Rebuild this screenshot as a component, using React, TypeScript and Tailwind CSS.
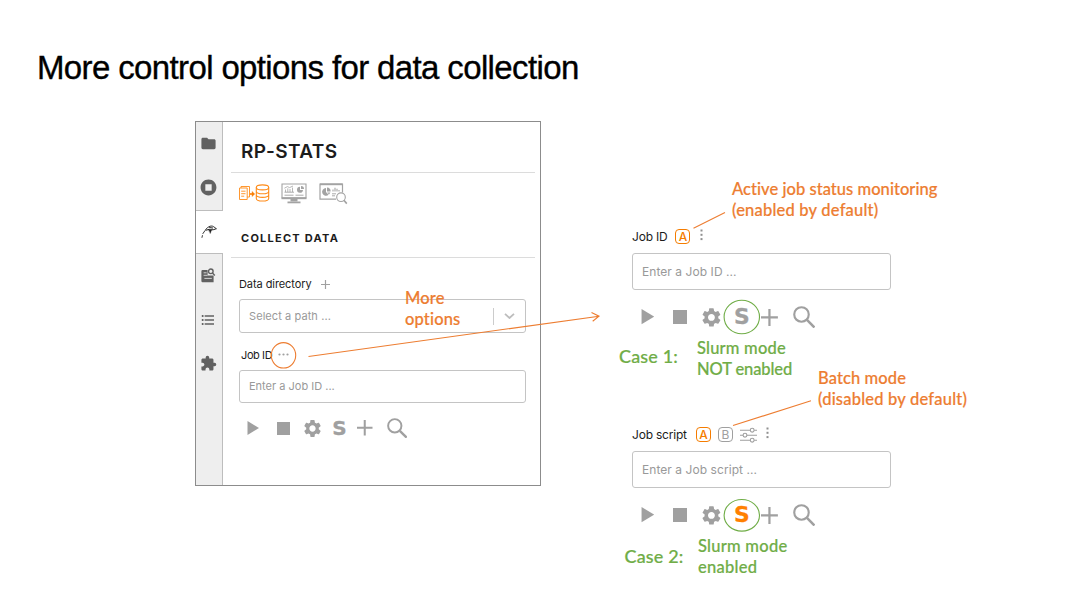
import type { ReactNode } from "react";
import { MdExtension, MdFolder, MdFormatListBulleted, MdSettings, MdStopCircle } from "react-icons/md";

function Bird() {
  return (
    <svg className="h-[14px] w-[16px]" viewBox="0 0 16 14" fill="none" stroke="#222" strokeLinecap="round">
      <path d="M1 12.4 1.4 10.6M1.9 8.6 4 5.6" strokeWidth="0.9" />
      <path d="M4.6 4.6Q6.4 2 9 1.2 11.4.5 12.8 1.8L15.2 3.6" strokeWidth="0.9" />
      <path d="M5 5.2 8.2 4.4M9.6 5 12.8 4.6 15 3.8M8.6 2.6 11.6 3" strokeWidth="1" />
      <path d="M7.6 4.4 10.6 4.6 9.4 8.2Z" fill="#222" strokeWidth="0.4" />
    </svg>
  );
}

function ReportSearch() {
  return (
    <svg className="h-[15px] w-[15px]" viewBox="0 0 15 15" fill="none">
      <path d="M1.6 2H6.6V7.4H12.6V14.2H1.6Q.4 14.2.4 13V3.2Q.4 2 1.6 2Z" fill="#616161" />
      <path d="M2.6 4.8H5.6M2.6 7.3H6.5M3.4 10.4H10.8" stroke="#eee" strokeWidth="0.8" />
      <circle cx="9.8" cy="3.3" r="2.3" fill="#eee" stroke="#616161" strokeWidth="1.4" />
      <path d="M11.5 5 13.8 7.4" stroke="#616161" strokeWidth="1.4" />
    </svg>
  );
}

function CollectIcon() {
  return (
    <svg className="-mt-px h-[18px] w-[31px]" viewBox="0 0 31 18" fill="none" stroke="#ff8c1a" strokeWidth="1">
      <path d="M.5 4H8.2V15.5H.5ZM2 4V2.5H10.5V13H8.2" strokeWidth=".9" />
      <path d="M2.2 7.2H6.5M2.2 9.7H6.5M2.2 12.2H5.2" strokeWidth=".9" />
      <path d="M11 10H14" strokeWidth="1.8" />
      <path d="M13 7.4 15.8 10 13 12.6Z" fill="#f57c00" strokeWidth=".4" />
      <ellipse cx="23.5" cy="3.4" rx="6.2" ry="2.5" strokeWidth="1.1" />
      <path d="M17.3 3.4V14.4C17.3 17.8 29.7 17.8 29.7 14.4V3.4M17.3 7.2C17.3 10.6 29.7 10.6 29.7 7.2M17.3 10.8C17.3 14.2 29.7 14.2 29.7 10.8" strokeWidth="1.1" />
    </svg>
  );
}

function MonitorIcon() {
  return (
    <svg className="h-[21px] w-[26px]" viewBox="0 0 26 21" fill="none" stroke="#a3a3a3">
      <path d="M1 1H25V14.8H1Z" strokeWidth="1.1" />
      <path d="M.5 15.3H25.5" strokeWidth="1.8" />
      <path d="M9.5 16H16.5V18.4H9.5Z" fill="#a3a3a3" stroke="none" />
      <path d="M6.5 19.4H19.5" strokeWidth="1.8" />
      <path d="M4.5 9V6.5M6.8 9V5.4M9 9V6M11.5 9V4.6M3.4 5.2 6.4 3.6 8.6 4.6 12 3" strokeWidth=".8" />
      <path d="M3.5 9.2H13M3.5 12.2H12.5M14.5 12.2H22.5" strokeWidth=".9" />
      <path d="M19 3.8A3 3 0 1 0 22 7H19Z" fill="#a3a3a3" stroke="none" />
      <path d="M20 3V6H23A3 3 0 0 0 20 3Z" fill="#a3a3a3" stroke="none" />
    </svg>
  );
}

function AnalyzeIcon() {
  return (
    <svg className="h-[22px] w-[29px]" viewBox="0 0 29 22" fill="none" stroke="#a3a3a3">
      <path d="M17 16.2H1V1H23.5V9.5" strokeWidth="1.2" />
      <path d="M1 1.3H23.5" strokeWidth="1.8" />
      <path d="M7 5A3.9 3.9 0 1 0 9.6 11.8L7 9Z" fill="#a3a3a3" stroke="none" />
      <path d="M8 4.6V8.6H11.6A3.9 3.9 0 0 0 8 4.6Z" fill="#a3a3a3" stroke="none" />
      <path d="M8.2 9.4H11.4L10 11.4Z" fill="#a3a3a3" stroke="none" />
      <path d="M14 8.5V6.5M16 8.5V4.8M18 8.5V5.8M20 8.5V7" strokeWidth="1.1" />
      <path d="M13 10.8H17M13 12.8H16" strokeWidth=".9" />
      <circle cx="22" cy="14.2" r="4.3" fill="white" strokeWidth="1.1" />
      <path d="M24.9 17.3 27.8 20.6" strokeWidth="1.6" />
    </svg>
  );
}

function Plus({ className }: { className: string }) {
  return (
    <svg className={className} viewBox="0 0 16 16" fill="none" stroke="#a0a0a0" strokeWidth="2.1">
      <path d="M8 0V16M0 8H16" />
    </svg>
  );
}

function Toolbar({ className, active = false }: { className: string; active?: boolean }) {
  return (
    <div className={`flex h-[2.4em] items-center text-[#a0a0a0] ${className}`}>
      <svg className="mr-[1.75em] h-[1.4em] w-[1.2em] shrink-0" viewBox="0 0 12 14" fill="currentColor">
        <path d="M.5 0 12 7 .5 14Z" />
      </svg>
      <div className="mr-[1.2em] size-[1.3em] shrink-0 bg-[#a0a0a0]" />
      <MdSettings className="size-[2.1em] shrink-0" />
      <span
        className={`ml-[0.95em] flex w-[1.5em] shrink-0 justify-center font-['DejaVu_Sans'] font-bold ${active ? "text-[#ff8000]" : "text-[#a0a0a0]"}`}
      >
        <span className="text-[2em] leading-none [-webkit-text-stroke:0.3px_currentColor]">S</span>
      </span>
      <Plus className="ml-[1em] size-[1.55em] shrink-0" />
      <svg className="ml-[1.4em] size-[2.05em] shrink-0" viewBox="0 0 20 20" fill="none" stroke="currentColor">
        <circle cx="7.6" cy="7.6" r="6.5" strokeWidth="1.9" />
        <path d="M12.5 12.5 19.2 19.2" strokeWidth="2.3" />
      </svg>
    </div>
  );
}

function Badge({ letter, on }: { letter: string; on?: boolean }) {
  return (
    <span
      className={`-mt-px flex h-[15px] w-[15px] items-center justify-center rounded-[4px] border text-[12px] leading-none ${on ? "border-[#f57c00] font-medium text-[#f57c00]" : "border-[#a0a0a0] text-[#a0a0a0]"}`}
    >
      {letter}
    </span>
  );
}

function Kebab() {
  return (
    <svg className="-mt-[4px] h-[12px] w-[3px]" viewBox="0 0 3 12" fill="#909090">
      <rect x=".5" y=".5" width="2" height="2" />
      <rect x=".5" y="4.8" width="2" height="2" />
      <rect x=".5" y="9.1" width="2" height="2" />
    </svg>
  );
}

function Sliders() {
  return (
    <svg className="-mt-px h-[16px] w-[17px]" viewBox="0 0 17 16" fill="none" stroke="#9e9e9e" strokeWidth="1.1">
      <path d="M0 3.2H10.2M14.2 3.2H17M0 8.2H3M7 8.2H17M0 13.2H10.2M14.2 13.2H17" />
      <circle cx="12.2" cy="3.2" r="1.9" />
      <circle cx="5" cy="8.2" r="1.9" />
      <circle cx="12.2" cy="13.2" r="1.9" />
    </svg>
  );
}

function JobForm({ label, placeholder, active, children }: { label: string; placeholder: string; active?: boolean; children: ReactNode }) {
  return (
    <section className="h-[198px] w-[260px]">
      <div className="flex h-[18px] items-center text-[12px] tracking-[-0.2px] text-[#1c1c1c]">
        <span>{label}</span>
        {children}
      </div>
      <div className="mt-[7px] flex h-[37px] w-[259px] items-center rounded-[3px] border-[1.5px] border-[#c4c4c4] pl-[9px] text-[12px] tracking-[0.06px] text-[#999]">
        {placeholder}
      </div>
      <Toolbar className="mt-[14px] ml-[9px] text-[10.9px]" active={active} />
    </section>
  );
}

function Tab({ children, active }: { children: ReactNode; active?: boolean }) {
  return (
    <div
      className={`flex h-[44px] w-[27px] items-center justify-center pr-[2px] pb-px text-[#616161] ${active ? "border-y border-[#bdbdbd] bg-white" : "border-r border-[#bdbdbd]"}`}
    >
      {children}
    </div>
  );
}

function StatsPanel() {
  return (
    <section className="flex h-[365px] w-[346px] border border-[#8c8c8c] bg-white">
      <nav className="flex w-[27px] shrink-0 flex-col bg-[#eee]">
        <Tab><MdFolder className="size-[17px]" /></Tab>
        <Tab><MdStopCircle className="size-[19px]" /></Tab>
        <Tab active><Bird /></Tab>
        <Tab><ReportSearch /></Tab>
        <Tab><MdFormatListBulleted className="size-[16px]" /></Tab>
        <Tab><MdExtension className="size-[17px]" /></Tab>
        <div className="grow border-r border-[#bdbdbd]" />
      </nav>
      <div className="ml-[8px] w-[304px]">
        <h2 className="flex h-[51px] items-center border-b border-[#dcdcdc] pt-[10px] pl-[10px] text-[19px] font-semibold tracking-[0.4px] text-[#1c1c1c]">RP-STATS</h2>
        <div className="flex h-[42px] items-center pb-px pl-[8px]">
          <CollectIcon />
          <div className="ml-[11px]"><MonitorIcon /></div>
          <div className="ml-[12px]"><AnalyzeIcon /></div>
        </div>
        <h3 className="flex h-[43px] items-center border-b border-[#dcdcdc] pt-[4px] pl-[10px] text-[11px] font-bold tracking-[1.25px] text-[#1c1c1c]">COLLECT DATA</h3>
        <div className="mt-[17px] flex h-[18px] items-center pl-[8px] text-[11px] tracking-[-0.08px] text-[#1c1c1c]">
          Data directory
          <Plus className="ml-[9px] size-[9px]" />
        </div>
        <div className="mt-[6px] ml-[8px] flex h-[34px] w-[287px] items-center rounded-[3px] border-[1.5px] border-[#c4c4c4] pr-[10px] pl-[9px] text-[11px] tracking-[0.08px] text-[#999]">
          Select a path ...
          <div className="ml-auto h-[17px] w-px bg-[#ccc]" />
          <svg className="ml-[10px] h-[6px] w-[11px]" viewBox="0 0 11 6" fill="none" stroke="#bdbdbd" strokeWidth="1.8">
            <path d="M1 .8 5.5 5 10 .8" />
          </svg>
        </div>
        <div className="mt-[13px] flex h-[18px] items-center pl-[10px] text-[11px] text-[#1c1c1c]">
          <span className="tracking-[-0.4px]">Job ID</span>
          <svg className="-mt-px ml-[6px] h-[3px] w-[11px]" viewBox="0 0 11 3" fill="#a0a0a0">
            <circle cx="1.5" cy="1.5" r="1.1" />
            <circle cx="5.5" cy="1.5" r="1.1" />
            <circle cx="9.5" cy="1.5" r="1.1" />
          </svg>
        </div>
        <div className="mt-[6px] ml-[8px] flex h-[33px] w-[287px] items-center rounded-[3px] border-[1.5px] border-[#c4c4c4] pl-[9px] text-[11px] text-[#999]">
          Enter a Job ID ...
        </div>
        <Toolbar className="mt-[13px] ml-[16px] text-[10px]" />
      </div>
    </section>
  );
}

function Note({ className, children }: { className: string; children: ReactNode }) {
  return (
    <p className={`absolute whitespace-nowrap font-['Lato','sans-serif'] font-medium leading-[21px] [-webkit-text-stroke:0.2px_currentColor] [font-variant-ligatures:none] ${className}`}>
      {children}
    </p>
  );
}

export default function App() {
  return (
    <main className="relative h-[608px] w-[1080px] overflow-hidden bg-white font-['Inter','sans-serif']">
      <h1 className="flex h-[121px] items-start pt-[50px] pl-[37px] font-['Liberation_Sans',sans-serif] text-[33px] leading-[36px] tracking-[-0.63px] text-black [-webkit-text-stroke:0.35px_black]">
        More control options for data collection
      </h1>
      <div className="flex pl-[195px]">
        <StatsPanel />
        <div className="ml-[91px] pt-[107px]">
          <JobForm label="Job ID" placeholder="Enter a Job ID ...">
            <div className="ml-[8px] flex items-center gap-[10px]">
              <Badge letter="A" on />
              <Kebab />
            </div>
          </JobForm>
          <JobForm label="Job script" placeholder="Enter a Job script ..." active>
            <div className="ml-[9px] flex items-center gap-[7px]">
              <Badge letter="A" on />
              <Badge letter="B" />
              <Sliders />
              <div className="ml-[2px]"><Kebab /></div>
            </div>
          </JobForm>
        </div>
      </div>

      <svg className="pointer-events-none absolute inset-0 h-[608px] w-[1080px]" viewBox="0 0 1080 608" fill="none">
        <g stroke="#ed7d31" strokeWidth="1.1">
          <ellipse cx="283.5" cy="355.3" rx="12.2" ry="12.7" />
          <path d="M308.5 356.5 599 316.2M591.5 312.6 599 316.2 592.7 321.2" />
          <path d="M693.5 228.3 725 212.4M733 425.5 811 400.8" />
        </g>
        <g stroke="#70ad47" strokeWidth="1.1">
          <ellipse cx="741.8" cy="317" rx="17.7" ry="16.7" />
          <ellipse cx="741.8" cy="515.3" rx="17.7" ry="15.8" />
        </g>
      </svg>
      <Note className="top-[288px] left-[405px] text-[16.5px] tracking-[0.15px] text-[#ed7d31]">More<br />options</Note>
      <Note className="top-[179px] left-[732px] text-[16.5px] tracking-[0.04px] text-[#ed7d31]">Active job status monitoring<br /><span className="tracking-[0.2px]">(enabled by default)</span></Note>
      <Note className="top-[368px] left-[818px] text-[16.5px] tracking-[0.2px] text-[#ed7d31]"><span className="tracking-[0.1px]">Batch mode</span><br />(disabled by default)</Note>
      <Note className="top-[338px] left-[697px] text-[16.5px] text-[#70ad47]"><span className="tracking-[0.2px]">Slurm mode</span><br /><span className="tracking-[-0.1px]">NOT enabled</span></Note>
      <Note className="top-[536px] left-[698px] text-[16.5px] tracking-[0.25px] text-[#70ad47]">Slurm mode<br />enabled</Note>
      <Note className="top-[346px] left-[619px] text-[18px] tracking-[0.15px] text-[#70ad47]">Case 1:</Note>
      <Note className="top-[546px] left-[624.5px] text-[18px] tracking-[0.15px] text-[#70ad47]">Case 2:</Note>
    </main>
  );
}
